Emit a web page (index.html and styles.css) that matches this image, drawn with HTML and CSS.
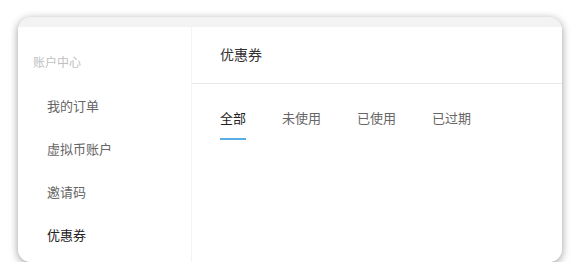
FILE: index.html
```html
<!DOCTYPE html>
<html lang="zh-CN">

<head>
    <meta charset="UTF-8">
    <title>优惠券</title>
    <link rel="stylesheet" href="styles.css">
</head>

<body>
    <div class="card">
        <div class="wrap">
            <div class="side">
                <p class="side-title">账户中心</p>
                <ul class="menu">
                    <li>我的订单</li>
                    <li>虚拟币账户</li>
                    <li>邀请码</li>
                    <li class="active">优惠券</li>
                </ul>
            </div>
            <div class="main">
                <div class="head">优惠券</div>
                <ul class="tabs">
                    <li class="on">全部</li>
                    <li>未使用</li>
                    <li>已使用</li>
                    <li>已过期</li>
                </ul>
            </div>
        </div>
    </div>
</body>

</html>
```

FILE: styles.css
```css
* {
    margin: 0;
    padding: 0;
    list-style: none;
}

body {
    background: #fff;
    font-family: "Noto Sans CJK SC", "Noto Sans", sans-serif;
    padding: 17px 18px 0;
}

.card {
    width: 544px;
    height: 245px;
    background: #f3f3f3;
    border-radius: 13px;
    box-shadow: 0 2px 8px rgba(0, 0, 0, 0.4);
    padding-top: 10px;
    box-sizing: border-box;
    overflow: hidden;
}

.wrap {
    display: flex;
    height: 100%;
    background: #fff;
}

.side {
    width: 173px;
    border-right: 1px solid #f4f4f4;
    padding-top: 27px;
}

.side-title {
    font-size: 12px;
    line-height: 16px;
    color: #c0c0c0;
    padding-left: 15px;
    margin-bottom: 14px;
}

.menu li {
    font-size: 13px;
    height: 43px;
    line-height: 43px;
    padding-left: 29px;
    color: #666;
}

.menu .active {
    color: #222;
}

.main {
    flex: 1;
}

.head {
    height: 56px;
    line-height: 54px;
    border-bottom: 1px solid #e9e9e9;
    padding-left: 28px;
    font-size: 14px;
    color: #333;
}

.tabs {
    display: flex;
    gap: 36px;
    padding: 25px 0 0 28px;
}

.tabs li {
    font-size: 13px;
    line-height: 18px;
    padding-bottom: 11px;
    border-bottom: 2px solid transparent;
    color: #666;
}

.tabs .on {
    color: #222;
    border-bottom-color: #5aaee6;
}
```
